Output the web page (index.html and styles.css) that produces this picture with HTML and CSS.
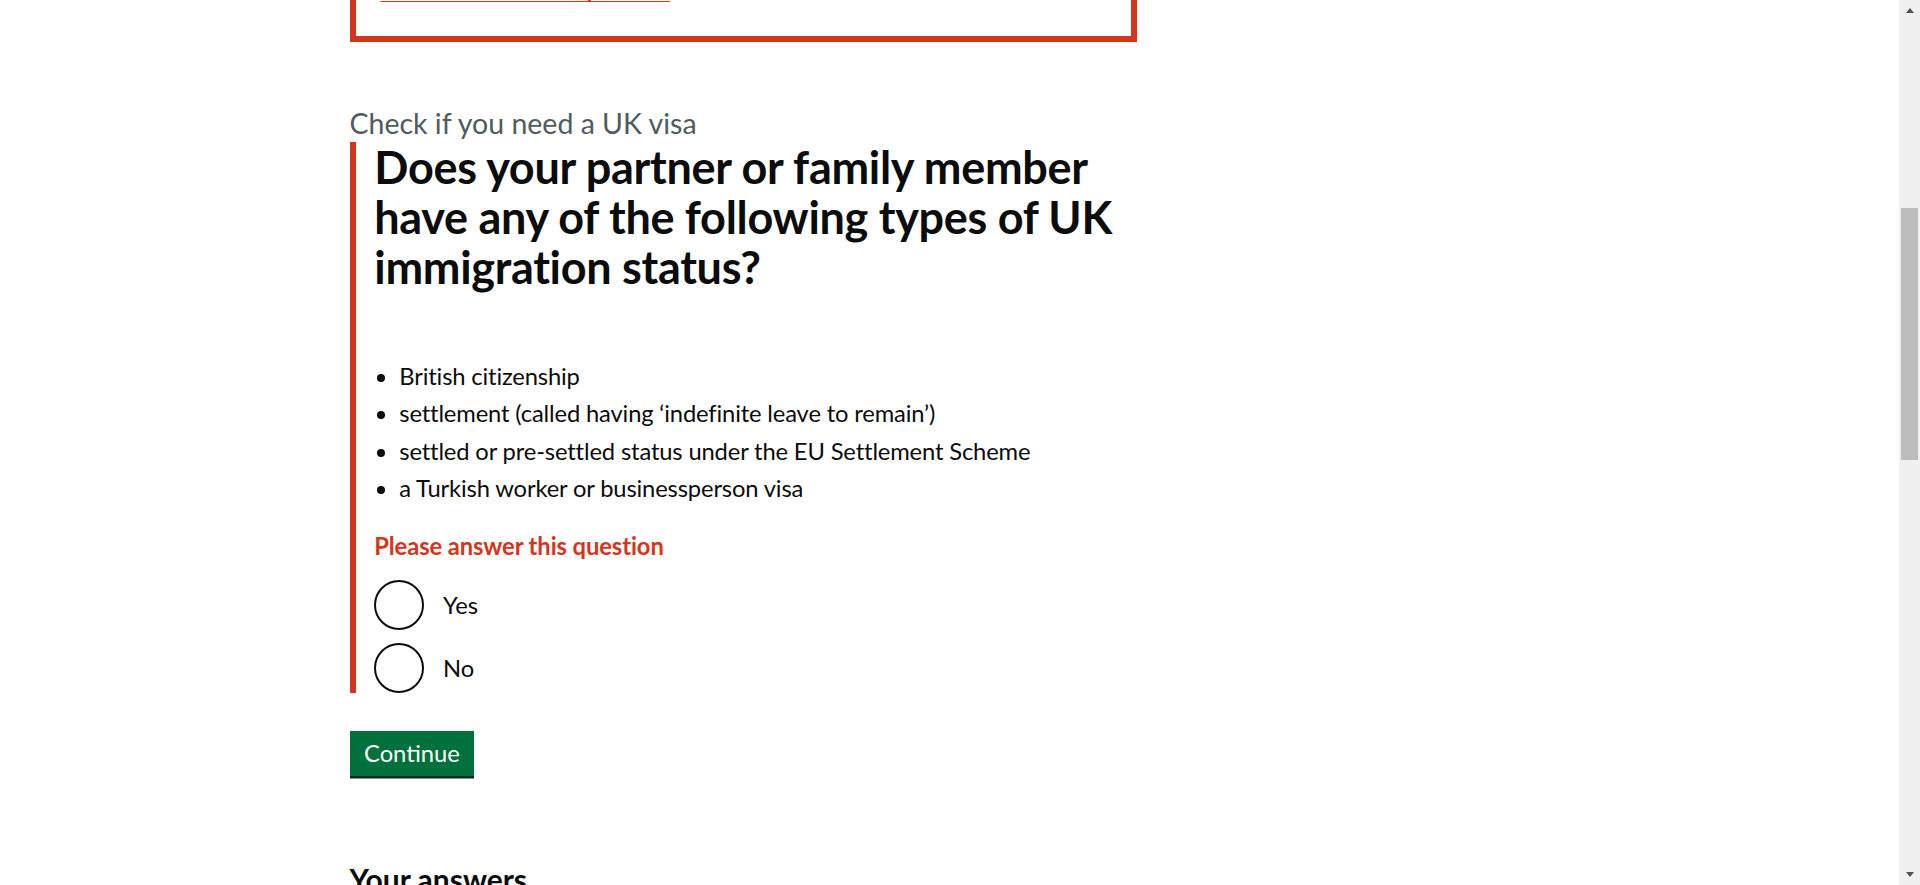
FILE: index.html
```html
<!DOCTYPE html>
<html lang="en">
<head>
<meta charset="utf-8">
<title>Check if you need a UK visa - GOV.UK</title>
<link rel="stylesheet" href="styles.css">
</head>
<body>
<div class="window">
  <div class="viewport">
    <header class="site-header">
      <div class="container header-inner">
        <span class="logo">GOV.UK</span>
      </div>
    </header>
    <div class="container">
      <main class="main">
        <div class="row">
          <div class="col-two-thirds">
            <div class="error-summary" role="alert">
              <h2 class="error-summary-title">There is a problem</h2>
              <ul class="error-summary-list">
                <li><a href="#response" class="error-link">Please answer this question</a></li>
              </ul>
            </div>

            <span class="caption">Check if you need a UK visa</span>
            <form class="question-form">
              <div class="form-group form-group-error">
                <fieldset class="fieldset">
                  <legend class="legend">
                    <h1 class="heading-l">Does your partner or family member have any of the following types of UK immigration status?</h1>
                  </legend>
                  <div class="hint">
                    <ul class="list list-bullet">
                      <li>British citizenship</li>
                      <li>settlement (called having ‘indefinite leave to remain’)</li>
                      <li>settled or pre-settled status under the EU Settlement Scheme</li>
                      <li>a Turkish worker or businessperson visa</li>
                    </ul>
                  </div>
                  <p class="error-message" id="response">Please answer this question</p>
                  <div class="radios">
                    <label class="radio-item">
                      <input class="radio-input" type="radio" name="response" value="yes">
                      <span class="radio-circle"></span>
                      <span class="radio-label">Yes</span>
                    </label>
                    <label class="radio-item">
                      <input class="radio-input" type="radio" name="response" value="no">
                      <span class="radio-circle"></span>
                      <span class="radio-label">No</span>
                    </label>
                  </div>
                </fieldset>
              </div>
              <button type="submit" class="button">Continue</button>
            </form>

            <section class="answers">
              <h2 class="heading-m">Your answers</h2>
              <dl class="summary-list">
                <div class="summary-row">
                  <dt>What’s your nationality?</dt>
                  <dd>Turkey</dd>
                  <dd class="summary-action"><a href="#">Change</a></dd>
                </div>
                <div class="summary-row">
                  <dt>What are you coming to the UK to do?</dt>
                  <dd>Join partner or family for a long stay</dd>
                  <dd class="summary-action"><a href="#">Change</a></dd>
                </div>
              </dl>
              <p class="body"><a href="#" class="link">Start again</a></p>
            </section>
          </div>
        </div>
      </main>
    </div>
    <footer class="footer">
      <div class="container">
        <p class="footer-text">All content is available under the Open Government Licence v3.0, except where otherwise stated</p>
        <p class="footer-text">© Crown copyright</p>
      </div>
    </footer>
  </div>
  <div class="scrollbar" aria-hidden="true">
    <div class="sb-btn"><span class="sb-arrow sb-up"></span></div>
    <div class="sb-track"><div class="sb-thumb"></div></div>
    <div class="sb-btn"><span class="sb-arrow sb-down"></span></div>
  </div>
</div>
<script src="script.js"></script>
</body>
</html>
```
FILE: styles.css
```css
* { box-sizing: border-box; }

html, body {
  margin: 0;
  padding: 0;
  height: 100%;
  overflow: hidden;
  background: #ffffff;
}

body {
  font-family: Lato, "Liberation Sans", Arial, sans-serif;
  color: #0b0c0c;
  font-size: 23.75px;
  line-height: 31.25px;
}

.window {
  display: flex;
  height: 100vh;
}

.viewport {
  flex: 1;
  height: 100%;
  overflow: hidden;
}

/* header (above the fold) */
.site-header {
  background: #0b0c0c;
  border-bottom: 12.5px solid #1d70b8;
  color: #fff;
}
.header-inner {
  padding: 12.5px 0 10px;
}
.logo {
  font-weight: 700;
  font-size: 37.5px;
  line-height: 62.5px;
}

.container {
  max-width: 1200px;
  margin: 0 auto;
}

.main {
  padding-top: 50px;
  padding-bottom: 60px;
}

.row {
  display: flex;
  margin: 0 -18.75px;
}
.col-two-thirds {
  flex: 0 0 66.6667%;
  padding: 0 18.75px;
}

/* error summary */
.error-summary {
  border: 6.25px solid #d4351c;
  padding: 25px;
  margin-bottom: 62.5px;
}
.error-summary-title {
  margin: 0 0 18.75px;
  font-size: 30px;
  line-height: 37.5px;
  font-weight: 700;
}
.error-summary-list {
  list-style: none;
  margin: 0;
  padding: 0;
}
.error-summary-list li {
  margin-bottom: 6.25px;
}
.error-link {
  color: #d4351c;
  font-weight: 700;
  letter-spacing: -0.1px;
  text-decoration: underline;
  text-decoration-thickness: 1.25px;
  text-underline-offset: 0.1578em;
}

/* caption + question */
.caption {
  display: block;
  color: #505a5f;
  font-size: 28.5px;
  line-height: 37.5px;
  padding-top: 1px;
  margin-bottom: -1px;
}

.question-form {
  margin: 0;
}

.form-group {
  margin-bottom: 38.5px;
}
.form-group-error {
  border-left: 6.25px solid #d4351c;
  padding-left: 18.75px;
}

.fieldset {
  margin: 0;
  padding: 0;
  border: 0;
  min-width: 0;
}
.legend {
  padding: 0;
  margin-bottom: 18.75px;
}
.heading-l {
  margin: 0;
  font-size: 45px;
  line-height: 50px;
  font-weight: 700;
  letter-spacing: -0.3px;
}

.hint {
  padding-top: 50px;
}

.list {
  margin: 0 0 27px;
  letter-spacing: -0.15px;
}
.list li {
  margin-bottom: 6.25px;
}
.list-bullet {
  padding-left: 25px;
  list-style: disc;
}

.error-message {
  margin: 0 0 17.75px;
  color: #d4351c;
  font-weight: 700;
  letter-spacing: -0.1px;
}

/* radios */
.radios {
  display: flex;
  flex-direction: column;
  gap: 12.5px;
}
.radio-item {
  display: flex;
  align-items: flex-start;
  min-height: 50px;
  cursor: pointer;
}
.radio-input {
  display: none;
}
.radio-circle {
  flex: 0 0 50px;
  width: 50px;
  height: 50px;
  border: 2.5px solid #0b0c0c;
  border-radius: 50%;
}
.radio-label {
  padding: 10px 18.75px 6.25px 18.75px;
}

/* button */
.button {
  display: inline-block;
  margin: 0 0 40px;
  padding: 9px 12.5px 9.75px;
  border: 2.5px solid transparent;
  background: #00703c;
  color: #ffffff;
  font-family: inherit;
  font-size: 23.75px;
  line-height: 22.25px;
  box-shadow: 0 2.5px 0 #002d18;
  border-radius: 0;
  cursor: pointer;
}

/* answers */
.answers {
  padding-top: 44.5px;
}
.heading-m {
  margin: 0 0 25px;
  font-size: 30px;
  line-height: 37.5px;
  font-weight: 700;
}
.summary-list {
  margin: 0 0 37.5px;
}
.summary-row {
  display: flex;
  border-bottom: 1.25px solid #b1b4b6;
  padding: 12.5px 0;
}
.summary-row dt {
  flex: 0 0 40%;
  font-weight: 700;
  padding-right: 25px;
}
.summary-row dd {
  margin: 0;
  flex: 1;
}
.summary-row .summary-action {
  flex: 0 0 20%;
  text-align: right;
}
.summary-row a,
.link {
  color: #1d70b8;
  text-decoration: underline;
  text-underline-offset: 0.1578em;
}
.body {
  margin: 0 0 25px;
}

/* footer */
.footer {
  background: #f3f2f1;
  border-top: 1.25px solid #b1b4b6;
  padding: 50px 0 100px;
  margin-top: 300px;
  font-size: 17.5px;
  line-height: 25px;
}
.footer-text {
  margin: 0 0 12.5px;
}

/* scrollbar of the window */
.scrollbar {
  flex: 0 0 21px;
  width: 21px;
  background: #f0f0f0;
  display: flex;
  flex-direction: column;
}
.sb-btn {
  flex: 0 0 21px;
  display: flex;
  align-items: center;
  justify-content: center;
}
.sb-arrow {
  width: 0;
  height: 0;
  border-left: 4.5px solid transparent;
  border-right: 4.5px solid transparent;
}
.sb-up {
  border-bottom: 5px solid #505050;
}
.sb-down {
  border-top: 5px solid #505050;
}
.sb-track {
  flex: 1;
}
.sb-thumb {
  margin: 187px 0 0 2px;
  width: 17px;
  height: 252px;
  background: #bdbdbd;
}
```
FILE: script.js
```js
(function () {
  var viewport = document.querySelector('.viewport');
  var summary = document.querySelector('.error-summary');
  var bottom = summary.getBoundingClientRect().bottom;
  viewport.scrollTop = Math.round(bottom - 42);
})();
```
